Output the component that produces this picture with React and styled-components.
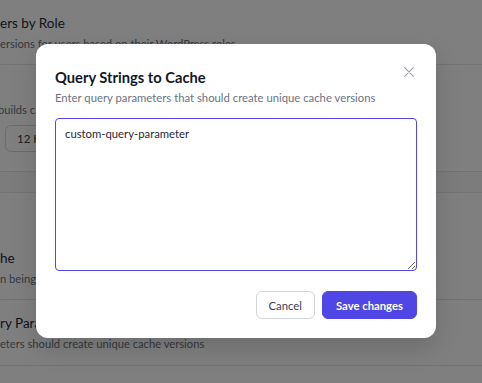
import React from "react";
import styled, { createGlobalStyle } from "styled-components";

const Global = createGlobalStyle`
  html, body { margin: 0; padding: 0; }
  body { font-family: Lato, "Liberation Sans", sans-serif; background: #fff; }
  * { box-sizing: border-box; }
`;

const Page = styled.div`
  position: relative;
  width: 482px;
  height: 383px;
  overflow: hidden;
  background: #fff;
`;

const Row = styled.div`
  height: ${(p) => p.$h}px;
  border-bottom: 1px solid #e5e7eb;
  background: ${(p) => (p.$band ? "#f6f8f7" : "#fff")};
  display: flex;
  flex-direction: column;
  justify-content: flex-end;
  padding: 0 0 ${(p) => p.$pb || 0}px 0;
`;

const RowTitle = styled.div`
  font-size: 13.5px;
  color: #1f2937;
  line-height: 20px;
  white-space: nowrap;
`;

const RowDesc = styled.div`
  font-size: 11.2px;
  color: #6b7280;
  line-height: 18px;
  margin-top: 2px;
  margin-left: ${(p) => p.$ml || 0}px;
  white-space: nowrap;
`;

const SelectBox = styled.div`
  width: 90px;
  height: 27px;
  margin: 6px 0 0 5px;
  border: 1px solid #d1d5db;
  border-radius: 6px;
  font-size: 11.5px;
  color: #374151;
  display: flex;
  align-items: center;
  padding-left: 11px;
  white-space: nowrap;
`;

const Overlay = styled.div`
  position: absolute;
  inset: 0;
  background: rgba(0, 0, 0, 0.5);
`;

const Modal = styled.div`
  position: absolute;
  left: 36px;
  top: 44px;
  width: 400px;
  background: #fff;
  border-radius: 12px;
  padding: 19px;
  display: flex;
  flex-direction: column;
  box-shadow: 0 10px 25px rgba(0, 0, 0, 0.15);
`;

const Header = styled.div`
  display: flex;
  justify-content: space-between;
  align-items: flex-start;
`;

const Title = styled.h2`
  margin: 4px 0 0;
  font-size: 14.7px;
  font-weight: 700;
  color: #111827;
  line-height: 20px;
`;

const Close = styled.button`
  border: 0;
  background: none;
  padding: 0;
  margin: 4px 3px 0 0;
  width: 10px;
  height: 10px;
  display: flex;
  cursor: pointer;
`;

const Subtitle = styled.p`
  margin: 3px 0 0;
  font-size: 11.3px;
  color: #6b7280;
  line-height: 16px;
`;

const Area = styled.textarea`
  margin-top: 12px;
  width: 362px;
  height: 153px;
  border: 1px solid #4f46e5;
  border-radius: 4px;
  padding: 7px 9px;
  font-family: inherit;
  font-size: 11.3px;
  color: #1f2937;
  line-height: 16px;
  outline: none;
  resize: vertical;
`;

const Footer = styled.div`
  margin-top: 20px;
  display: flex;
  justify-content: flex-end;
  gap: 7px;
`;

const Button = styled.button`
  height: 28px;
  padding: 0 ${(p) => (p.$primary ? 13 : 12)}px;
  border-radius: 6px;
  font-family: inherit;
  font-size: 11.3px;
  font-weight: ${(p) => (p.$primary ? 700 : 400)};
  border: 1px solid ${(p) => (p.$primary ? "#4f46e5" : "#d1d5db")};
  background: ${(p) => (p.$primary ? "#4f46e5" : "#fff")};
  color: ${(p) => (p.$primary ? "#fff" : "#374151")};
  cursor: pointer;
`;

export default function App() {
  return (
    <Page>
      <Global />
      <Row $h={65} $pb={11}>
        <RowTitle>ers by Role</RowTitle>
        <RowDesc>ersions for users based on their WordPress roles</RowDesc>
      </Row>
      <Row $h={107} $pb={19}>
        <RowDesc $ml={-2}>builds cache</RowDesc>
        <SelectBox>12 Hours</SelectBox>
      </Row>
      <Row $h={21} $band />
      <Row $h={107} $pb={11}>
        <RowTitle>he</RowTitle>
        <RowDesc>n being cached</RowDesc>
      </Row>
      <Row $h={66} $pb={12}>
        <RowTitle>ry Parameters</RowTitle>
        <RowDesc>eters should create unique cache versions</RowDesc>
      </Row>
      <Overlay />
      <Modal role="dialog">
        <Header>
          <Title>Query Strings to Cache</Title>
          <Close aria-label="Close">
            <svg width="10" height="10" viewBox="0 0 10 10">
              <path d="M0.7 0.7L9.3 9.3M9.3 0.7L0.7 9.3" stroke="#9ca3af" strokeWidth="1.2" strokeLinecap="round" />
            </svg>
          </Close>
        </Header>
        <Subtitle>Enter query parameters that should create unique cache versions</Subtitle>
        <Area defaultValue="custom-query-parameter" />
        <Footer>
          <Button>Cancel</Button>
          <Button $primary>Save changes</Button>
        </Footer>
      </Modal>
    </Page>
  );
}
